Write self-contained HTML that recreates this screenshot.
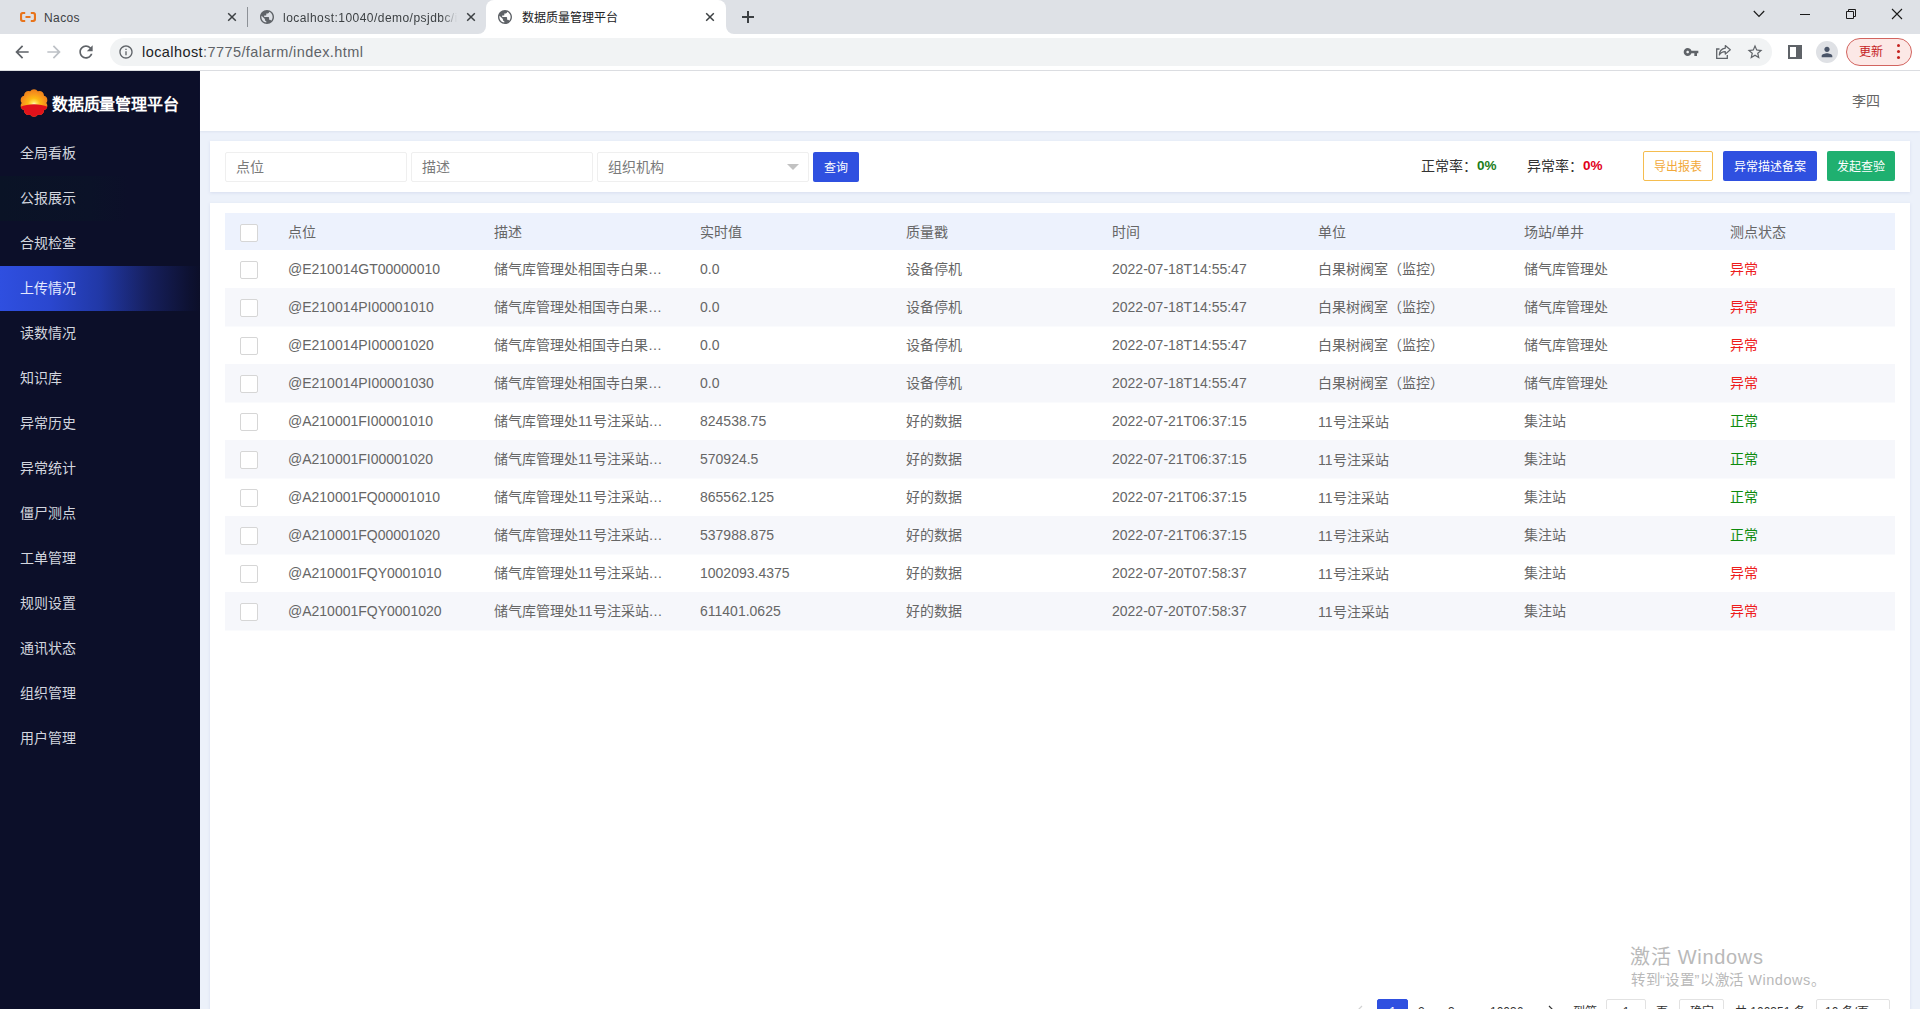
<!DOCTYPE html>
<html lang="zh-CN">
<head>
<meta charset="utf-8">
<title>数据质量管理平台</title>
<style>
*{box-sizing:border-box;margin:0;padding:0}
html,body{width:1920px;height:1009px;overflow:hidden;background:#fff;font-family:"Liberation Sans",sans-serif;color:#666}
body{position:relative}
.a{position:absolute}
svg{display:block;position:absolute;overflow:visible}
/* ---------- browser chrome ---------- */
#tabbar{left:0;top:0;width:1920px;height:34px;background:#dee1e6}
#acttab{left:486px;top:0;width:240px;height:34px;background:#fff;border-radius:8px 8px 0 0}
.foot{width:8px;height:8px;top:26px;background:#fff}
.foot i{display:block;width:8px;height:8px;background:#dee1e6}
.tt{top:10px;height:16px;line-height:16px;font-size:12px;color:#3c4043;white-space:nowrap;overflow:hidden}
#toolbar{left:0;top:34px;width:1920px;height:36px;background:#fff}
#tbline{left:0;top:70px;width:1920px;height:1px;background:#dcdee1}
#omni{left:110px;top:38px;width:1662px;height:28px;border-radius:14px;background:#f1f3f4}
#url{left:142px;top:42px;height:20px;line-height:20px;font-size:14.5px;color:#5f6368;white-space:nowrap;letter-spacing:.42px}
#url b{font-weight:400;color:#202124}
#upd{left:1846px;top:38px;width:66px;height:28px;border-radius:14px;border:1px solid #d2645f;background:#fce8e6}
#upd span{position:absolute;left:12px;top:6px;font-size:12px;line-height:14px;color:#c5221f;white-space:nowrap}
/* ---------- app ---------- */
#side{left:0;top:71px;width:200px;height:938px;background:#0c0f29}
#hdr{left:200px;top:71px;width:1720px;height:60px;background:#fff;box-shadow:0 1px 2px rgba(100,120,160,.10)}
#bg{left:200px;top:131px;width:1720px;height:878px;background:#ecf1fa}

#side .mi{position:absolute;left:0;width:200px;height:45px;line-height:45px;padding-left:20px;font-size:14px;color:#d3d6df;white-space:nowrap}
#side .on{background:linear-gradient(90deg,#2f4fe0 0%,#2a47cf 25%,#2138a6 50%,#161f5c 75%,#0d1131 95%,#0c0f29 100%);color:#e4e9ff}
#logo-t{left:52px;top:23px;height:22px;line-height:22px;font-size:16px;font-weight:700;color:#fff;white-space:nowrap;letter-spacing:-.2px}
#user{left:1852px;top:91px;font-size:14px;line-height:20px;color:#666;white-space:nowrap}
.card{background:#fff;box-shadow:0 1px 3px rgba(120,140,190,.18)}
.inp{top:152px;height:30px;border:1px solid #efefef;border-radius:2px;background:#fff;font-size:14px;line-height:28px;padding-left:10px;color:#7a7a7a;white-space:nowrap}
.btn{top:152px;height:30px;line-height:30px;border-radius:2px;font-size:12px;color:#fff;text-align:center;white-space:nowrap;font-weight:400;padding-top:1px}
.rate{top:156px;height:20px;line-height:20px;font-size:14px;color:#333;white-space:nowrap}
.rate b{position:absolute;left:56px;top:0;font-size:13.5px}

#th{left:225px;top:213px;width:1670px;height:37px;background:#edf2fd}
.tr{position:absolute;left:225px;width:1670px;height:38px}
.tr.ev{background:#f6f7fb;box-shadow:0 1px 0 #fafbfd}
.c{position:absolute;top:0;height:100%;font-size:14px;color:#666;white-space:nowrap;overflow:hidden;display:flex;align-items:center}
.cb{position:absolute;left:15px;width:18px;height:18px;border:1px solid #d6d6d6;border-radius:2px;background:#fff}
.z{padding-bottom:2px}
.bad{color:#ee1c1c}
.ok{color:#0d8a0d}
.pg{top:999px;height:30px;border:1px solid #e2e2e2;background:#fff;font-size:12px;line-height:24px;color:#333;text-align:center;white-space:nowrap}
.pt{top:1000px;font-size:12px;line-height:24px;color:#333;white-space:nowrap}
#wm1{left:1630px;top:943px;font-size:20px;line-height:28px;color:#b9b9b9;white-space:nowrap;letter-spacing:.7px}
#wm2{left:1631px;top:970px;font-size:14.5px;line-height:20px;color:#b9b9b9;white-space:nowrap;letter-spacing:.55px}
</style>
</head>
<body>
<!-- ======= browser chrome ======= -->
<div id="tabbar" class="a"></div>
<div id="acttab" class="a"></div>
<div class="a foot" style="left:478px"><i style="border-radius:0 0 8px 0"></i></div>
<div class="a foot" style="left:726px"><i style="border-radius:0 0 0 8px"></i></div>
<div id="toolbar" class="a"></div>
<div id="tbline" class="a"></div>
<div id="omni" class="a"></div>
<div id="url" class="a"><b>localhost</b>:7775/falarm/index.html</div>
<!-- tab 1 : Nacos -->
<svg style="left:20px;top:12px" width="16" height="10" viewBox="0 0 16 10"><path d="M5.200 0H2.400C1.100 0 0 1.100 0 2.400v5.200C0 8.900 1.100 10 2.400 10h2.800V7.900H3c-.5 0-.9-.4-.9-.9V3c0-.5.400-.9.9-.9h2.200zM10.800 0h2.800C14.900 0 16 1.100 16 2.400v5.200c0 1.300-1.100 2.400-2.400 2.400h-2.800V7.900H13c.5 0 .9-.4.9-.9V3c0-.5-.4-.9-.9-.9h-2.200zM5.500 4.100h5v1.800h-5z" fill="#e8741c"/></svg>
<div class="a tt" style="left:44px;width:170px;letter-spacing:.4px">Nacos</div>
<svg style="left:226px;top:11px" width="12" height="12" viewBox="0 0 12 12"><path d="M2.200 2.200l7.600 7.600M9.800 2.200l-7.600 7.600" stroke="#3c4043" stroke-width="1.500" fill="none"/></svg>
<div class="a" style="left:247px;top:7px;width:1px;height:20px;background:#8d9197"></div>
<!-- tab 2 : localhost:10040 -->
<svg style="left:260px;top:10px" width="14" height="14" viewBox="2 2 20 20"><path fill="#5f6368" d="M12 2C6.480 2 2 6.480 2 12s4.480 10 10 10 10-4.480 10-10S17.520 2 12 2zm-1 17.930c-3.950-.490-7-3.850-7-7.930 0-.620.080-1.210.210-1.790L9 15v1c0 1.100.9 2 2 2v1.930zm6.900-2.540c-.260-.810-1-1.390-1.900-1.390h-1v-3c0-.550-.450-1-1-1H8v-2h2c.550 0 1-.450 1-1V7h2c1.100 0 2-.9 2-2v-.410c2.930 1.190 5 4.060 5 7.410 0 2.080-.8 3.970-2.100 5.390z"/></svg>
<div class="a tt" style="left:283px;width:176px;letter-spacing:.46px;-webkit-mask-image:linear-gradient(90deg,#000 90%,transparent 99%);mask-image:linear-gradient(90deg,#000 90%,transparent 99%)">localhost:10040/demo/psjdbc/index</div>
<svg style="left:465px;top:11px" width="12" height="12" viewBox="0 0 12 12"><path d="M2.200 2.200l7.600 7.600M9.800 2.200l-7.600 7.600" stroke="#3c4043" stroke-width="1.500" fill="none"/></svg>
<!-- tab 3 : active -->
<svg style="left:498px;top:10px" width="14" height="14" viewBox="2 2 20 20"><path fill="#5f6368" d="M12 2C6.480 2 2 6.480 2 12s4.480 10 10 10 10-4.480 10-10S17.520 2 12 2zm-1 17.930c-3.950-.490-7-3.850-7-7.930 0-.620.080-1.210.210-1.790L9 15v1c0 1.100.9 2 2 2v1.930zm6.900-2.540c-.260-.810-1-1.390-1.900-1.390h-1v-3c0-.550-.450-1-1-1H8v-2h2c.550 0 1-.450 1-1V7h2c1.100 0 2-.9 2-2v-.410c2.930 1.190 5 4.060 5 7.410 0 2.080-.8 3.970-2.100 5.390z"/></svg>
<div class="a tt" style="left:522px;width:170px;color:#202124">数据质量管理平台</div>
<svg style="left:704px;top:11px" width="12" height="12" viewBox="0 0 12 12"><path d="M2.200 2.200l7.600 7.600M9.800 2.200l-7.600 7.600" stroke="#3c4043" stroke-width="1.500" fill="none"/></svg>
<svg style="left:741px;top:10px" width="14" height="14" viewBox="0 0 14 14"><path d="M7 1v12M1 7h12" stroke="#3c4043" stroke-width="2" fill="none"/></svg>
<!-- window controls -->
<svg style="left:1753px;top:10px" width="12" height="8" viewBox="0 0 12 8"><path d="M.8 1l5.200 5.400L11.200 1" stroke="#1a1a1a" stroke-width="1.200" fill="none"/></svg>
<div class="a" style="left:1800px;top:14px;width:10px;height:1px;background:#1a1a1a"></div>
<svg style="left:1846px;top:9px" width="10" height="10" viewBox="0 0 10 10"><path d="M.5 2.500h7v7h-7zM2.500 2.500v-2h7v7h-2" stroke="#1a1a1a" stroke-width="1" fill="none"/></svg>
<svg style="left:1892px;top:9px" width="10" height="10" viewBox="0 0 10 10"><path d="M0 0l10 10M10 0L0 10" stroke="#1a1a1a" stroke-width="1.100" fill="none"/></svg>
<!-- nav buttons -->
<svg style="left:12px;top:42px" width="20" height="20" viewBox="0 0 24 24"><path fill="#5f6368" d="M20 11H7.830l5.590-5.590L12 4l-8 8 8 8 1.410-1.410L7.830 13H20v-2z"/></svg>
<svg style="left:44px;top:42px" width="20" height="20" viewBox="0 0 24 24"><path fill="#bdc1c6" d="M4 11h12.170l-5.590-5.590L12 4l8 8-8 8-1.410-1.410L16.170 13H4v-2z"/></svg>
<svg style="left:76px;top:42px" width="20" height="20" viewBox="0 0 24 24"><path fill="#5f6368" d="M17.650 6.350C16.200 4.900 14.210 4 12 4c-4.420 0-7.990 3.580-7.990 8s3.570 8 7.990 8c3.730 0 6.840-2.550 7.730-6h-2.080c-.820 2.330-3.040 4-5.650 4-3.310 0-6-2.690-6-6s2.690-6 6-6c1.660 0 3.140.690 4.220 1.780L13 11h7V4l-2.350 2.350z"/></svg>
<svg style="left:118px;top:44px" width="16" height="16" viewBox="0 0 24 24"><path fill="#5f6368" d="M11 7h2v2h-2zm0 4h2v6h-2zm1-9C6.480 2 2 6.480 2 12s4.480 10 10 10 10-4.480 10-10S17.520 2 12 2zm0 18c-4.410 0-8-3.590-8-8s3.590-8 8-8 8 3.590 8 8-3.590 8-8 8z"/></svg>
<!-- omnibox right icons -->
<svg style="left:1683px;top:44px" width="16" height="16" viewBox="0 0 24 24"><path fill="#5f6368" d="M12.650 10C11.830 7.670 9.610 6 7 6c-3.310 0-6 2.690-6 6s2.690 6 6 6c2.610 0 4.830-1.670 5.650-4H17v4h4v-4h2v-4H12.650zM7 14c-1.100 0-2-.9-2-2s.9-2 2-2 2 .9 2 2-.9 2-2 2z"/></svg>
<svg style="left:1715px;top:44px" width="17" height="16" viewBox="0 0 17 16"><path d="M4.500 5H1.700v9.300h10.600V11" stroke="#5f6368" stroke-width="1.300" fill="none"/><path d="M10.300 1.500l5 4.300-5 4.300V7.600C7.300 7.500 5.500 8.800 4.300 11c.2-3.600 2.300-6.300 6-6.800z" stroke="#5f6368" stroke-width="1.200" fill="none" stroke-linejoin="round"/></svg>
<svg style="left:1746px;top:43px" width="18" height="18" viewBox="0 0 24 24"><path fill="#5f6368" d="M22 9.240l-7.190-.620L12 2 9.190 8.630 2 9.240l5.460 4.730L5.820 21 12 17.270 18.180 21l-1.630-7.030L22 9.240zM12 15.400l-3.760 2.270 1-4.280-3.320-2.880 4.380-.380L12 6.100l1.710 4.040 4.380.380-3.320 2.880 1 4.280L12 15.400z"/></svg>
<svg style="left:1788px;top:45px" width="14" height="14" viewBox="0 0 14 14"><path d="M1 1h12v12H1z" stroke="#5f6368" stroke-width="2" fill="none"/><path d="M8 1h5v12H8z" fill="#5f6368"/></svg>
<div class="a" style="left:1816px;top:41px;width:22px;height:22px;border-radius:11px;background:#dfe1e5"></div>
<svg style="left:1819px;top:44px" width="16" height="16" viewBox="0 0 24 24"><path fill="#4a5568" d="M12 12c2.210 0 4-1.790 4-4s-1.790-4-4-4-4 1.790-4 4 1.790 4 4 4zm0 2c-2.670 0-8 1.340-8 4v2h16v-2c0-2.660-5.330-4-8-4z"/></svg>
<div id="upd" class="a"><span>更新</span><i class="a" style="left:50px;top:5px;width:3px;height:3px;border-radius:2px;background:#c5221f;box-shadow:0 6px 0 #c5221f,0 12px 0 #c5221f"></i></div>

<!-- ======= app ======= -->
<div id="side" class="a">
<svg style="left:20px;top:18px" width="28" height="28" viewBox="0 0 28 28"><defs><radialGradient id="sun" gradientUnits="userSpaceOnUse" cx="14" cy="15.500" r="14"><stop offset="0" stop-color="#fffbe0"/><stop offset=".18" stop-color="#ffe45a"/><stop offset=".45" stop-color="#fdb813"/><stop offset=".8" stop-color="#f7941d"/><stop offset="1" stop-color="#f08519"/></radialGradient><clipPath id="fl"><circle cx="14" cy="14" r="9.6"/><circle cx="14.00" cy="4.70" r="4.5"/><circle cx="8.53" cy="6.48" r="4.5"/><circle cx="5.16" cy="11.13" r="4.5"/><circle cx="5.16" cy="16.87" r="4.5"/><circle cx="8.53" cy="21.52" r="4.5"/><circle cx="14.00" cy="23.30" r="4.5"/><circle cx="19.47" cy="21.52" r="4.5"/><circle cx="22.84" cy="16.87" r="4.5"/><circle cx="22.84" cy="11.13" r="4.5"/><circle cx="19.47" cy="6.48" r="4.5"/></clipPath></defs><g clip-path="url(#fl)"><rect width="28" height="28" fill="url(#sun)"/><path d="M-1 18.500C3.500 16.200 8.500 15.200 14 15.200s10.500 1 15 3.300V29H-1z" fill="#e1121b"/></g></svg>
<div id="logo-t" class="a">数据质量管理平台</div>
<div class="mi" style="top:60px">全局看板</div>
<div class="mi" style="top:105px;background:linear-gradient(90deg,#0a1326 0%,#0b1228 45%,#0c0f29 64%)">公报展示</div>
<div class="mi" style="top:150px">合规检查</div>
<div class="mi on" style="top:195px">上传情况</div>
<div class="mi" style="top:240px">读数情况</div>
<div class="mi" style="top:285px">知识库</div>
<div class="mi" style="top:330px">异常历史</div>
<div class="mi" style="top:375px">异常统计</div>
<div class="mi" style="top:420px">僵尸测点</div>
<div class="mi" style="top:465px">工单管理</div>
<div class="mi" style="top:510px">规则设置</div>
<div class="mi" style="top:555px">通讯状态</div>
<div class="mi" style="top:600px">组织管理</div>
<div class="mi" style="top:645px">用户管理</div>
</div>
<div id="bg" class="a"></div>
<div id="hdr" class="a"></div>
<div id="user" class="a">李四</div>
<!-- filter card -->
<div class="a card" style="left:210px;top:141px;width:1700px;height:51px"></div>
<div class="a inp" style="left:225px;width:182px">点位</div>
<div class="a inp" style="left:411px;width:182px">描述</div>
<div class="a inp" style="left:597px;width:212px">组织机构</div>
<div class="a" style="left:787px;top:164px;width:0;height:0;border:6px solid transparent;border-top:6px solid #c2c2c2"></div>
<div class="a btn" style="left:813px;width:46px;background:#2f50e0">查询</div>
<div class="a rate" style="left:1421px">正常率：<b style="color:#1a7d1a">0%</b></div>
<div class="a rate" style="left:1527px">异常率：<b style="color:#e1001a">0%</b></div>
<div class="a btn" style="left:1643px;top:151px;width:70px;border:1px solid #f5bd4f;background:#fff;color:#f2a93b;line-height:28px;font-weight:400">导出报表</div>
<div class="a btn" style="left:1723px;top:151px;width:94px;background:#2f50e0">异常描述备案</div>
<div class="a btn" style="left:1827px;top:151px;width:68px;background:#1fb070">发起查验</div>
<!-- table card -->
<div class="a card" style="left:210px;top:203px;width:1700px;height:820px"></div>
<!-- table -->
<div id="th" class="a"><i class="cb" style="top:11px"></i><span class="c z" style="left:63px;width:200px">点位</span><span class="c z" style="left:269px;width:172px">描述</span><span class="c z" style="left:475px;width:200px">实时值</span><span class="c z" style="left:681px;width:200px">质量戳</span><span class="c z" style="left:887px;width:200px">时间</span><span class="c z" style="left:1093px;width:200px">单位</span><span class="c z" style="left:1299px;width:200px">场站/单井</span><span class="c z" style="left:1505px;width:160px">测点状态</span></div>
<div class="tr" style="top:250px"><i class="cb" style="top:11px"></i><span class="c" style="left:63px;width:200px">@E210014GT00000010</span><span class="c z" style="left:269px;width:172px">储气库管理处相国寺白果…</span><span class="c" style="left:475px;width:200px">0.0</span><span class="c z" style="left:681px;width:200px">设备停机</span><span class="c" style="left:887px;width:200px">2022-07-18T14:55:47</span><span class="c z" style="left:1093px;width:200px">白果树阀室（监控）</span><span class="c z" style="left:1299px;width:200px">储气库管理处</span><span class="c bad z" style="left:1505px;width:160px">异常</span></div>
<div class="tr ev" style="top:288px"><i class="cb" style="top:11px"></i><span class="c" style="left:63px;width:200px">@E210014PI00001010</span><span class="c z" style="left:269px;width:172px">储气库管理处相国寺白果…</span><span class="c" style="left:475px;width:200px">0.0</span><span class="c z" style="left:681px;width:200px">设备停机</span><span class="c" style="left:887px;width:200px">2022-07-18T14:55:47</span><span class="c z" style="left:1093px;width:200px">白果树阀室（监控）</span><span class="c z" style="left:1299px;width:200px">储气库管理处</span><span class="c bad z" style="left:1505px;width:160px">异常</span></div>
<div class="tr" style="top:326px"><i class="cb" style="top:11px"></i><span class="c" style="left:63px;width:200px">@E210014PI00001020</span><span class="c z" style="left:269px;width:172px">储气库管理处相国寺白果…</span><span class="c" style="left:475px;width:200px">0.0</span><span class="c z" style="left:681px;width:200px">设备停机</span><span class="c" style="left:887px;width:200px">2022-07-18T14:55:47</span><span class="c z" style="left:1093px;width:200px">白果树阀室（监控）</span><span class="c z" style="left:1299px;width:200px">储气库管理处</span><span class="c bad z" style="left:1505px;width:160px">异常</span></div>
<div class="tr ev" style="top:364px"><i class="cb" style="top:11px"></i><span class="c" style="left:63px;width:200px">@E210014PI00001030</span><span class="c z" style="left:269px;width:172px">储气库管理处相国寺白果…</span><span class="c" style="left:475px;width:200px">0.0</span><span class="c z" style="left:681px;width:200px">设备停机</span><span class="c" style="left:887px;width:200px">2022-07-18T14:55:47</span><span class="c z" style="left:1093px;width:200px">白果树阀室（监控）</span><span class="c z" style="left:1299px;width:200px">储气库管理处</span><span class="c bad z" style="left:1505px;width:160px">异常</span></div>
<div class="tr" style="top:402px"><i class="cb" style="top:11px"></i><span class="c" style="left:63px;width:200px">@A210001FI00001010</span><span class="c z" style="left:269px;width:172px">储气库管理处11号注采站…</span><span class="c" style="left:475px;width:200px">824538.75</span><span class="c z" style="left:681px;width:200px">好的数据</span><span class="c" style="left:887px;width:200px">2022-07-21T06:37:15</span><span class="c" style="left:1093px;width:200px">11号注采站</span><span class="c z" style="left:1299px;width:200px">集注站</span><span class="c ok z" style="left:1505px;width:160px">正常</span></div>
<div class="tr ev" style="top:440px"><i class="cb" style="top:11px"></i><span class="c" style="left:63px;width:200px">@A210001FI00001020</span><span class="c z" style="left:269px;width:172px">储气库管理处11号注采站…</span><span class="c" style="left:475px;width:200px">570924.5</span><span class="c z" style="left:681px;width:200px">好的数据</span><span class="c" style="left:887px;width:200px">2022-07-21T06:37:15</span><span class="c" style="left:1093px;width:200px">11号注采站</span><span class="c z" style="left:1299px;width:200px">集注站</span><span class="c ok z" style="left:1505px;width:160px">正常</span></div>
<div class="tr" style="top:478px"><i class="cb" style="top:11px"></i><span class="c" style="left:63px;width:200px">@A210001FQ00001010</span><span class="c z" style="left:269px;width:172px">储气库管理处11号注采站…</span><span class="c" style="left:475px;width:200px">865562.125</span><span class="c z" style="left:681px;width:200px">好的数据</span><span class="c" style="left:887px;width:200px">2022-07-21T06:37:15</span><span class="c" style="left:1093px;width:200px">11号注采站</span><span class="c z" style="left:1299px;width:200px">集注站</span><span class="c ok z" style="left:1505px;width:160px">正常</span></div>
<div class="tr ev" style="top:516px"><i class="cb" style="top:11px"></i><span class="c" style="left:63px;width:200px">@A210001FQ00001020</span><span class="c z" style="left:269px;width:172px">储气库管理处11号注采站…</span><span class="c" style="left:475px;width:200px">537988.875</span><span class="c z" style="left:681px;width:200px">好的数据</span><span class="c" style="left:887px;width:200px">2022-07-21T06:37:15</span><span class="c" style="left:1093px;width:200px">11号注采站</span><span class="c z" style="left:1299px;width:200px">集注站</span><span class="c ok z" style="left:1505px;width:160px">正常</span></div>
<div class="tr" style="top:554px"><i class="cb" style="top:11px"></i><span class="c" style="left:63px;width:200px">@A210001FQY0001010</span><span class="c z" style="left:269px;width:172px">储气库管理处11号注采站…</span><span class="c" style="left:475px;width:200px">1002093.4375</span><span class="c z" style="left:681px;width:200px">好的数据</span><span class="c" style="left:887px;width:200px">2022-07-20T07:58:37</span><span class="c" style="left:1093px;width:200px">11号注采站</span><span class="c z" style="left:1299px;width:200px">集注站</span><span class="c bad z" style="left:1505px;width:160px">异常</span></div>
<div class="tr ev" style="top:592px"><i class="cb" style="top:11px"></i><span class="c" style="left:63px;width:200px">@A210001FQY0001020</span><span class="c z" style="left:269px;width:172px">储气库管理处11号注采站…</span><span class="c" style="left:475px;width:200px">611401.0625</span><span class="c z" style="left:681px;width:200px">好的数据</span><span class="c" style="left:887px;width:200px">2022-07-20T07:58:37</span><span class="c" style="left:1093px;width:200px">11号注采站</span><span class="c z" style="left:1299px;width:200px">集注站</span><span class="c bad z" style="left:1505px;width:160px">异常</span></div>
<!-- pagination (cut off by viewport) -->
<svg style="left:1355px;top:1005px" width="8" height="12" viewBox="0 0 8 12"><path d="M7 1L2 6l5 5" stroke="#d2d2d2" stroke-width="1.200" fill="none"/></svg>
<div class="a pg" style="left:1377px;width:31px;background:#2f50e0;border-color:#2f50e0;color:#fff;border-radius:2px">1</div>
<div class="a pt" style="left:1418px">2</div>
<div class="a pt" style="left:1448px">3</div>
<div class="a pt" style="left:1472px">…</div>
<div class="a pt" style="left:1490px">10036</div>
<svg style="left:1548px;top:1005px" width="8" height="12" viewBox="0 0 8 12"><path d="M1 1l5 5-5 5" stroke="#333" stroke-width="1.200" fill="none"/></svg>
<div class="a pt" style="left:1573px">到第</div>
<div class="a pg" style="left:1606px;width:40px;border-radius:2px">1</div>
<div class="a pt" style="left:1656px">页</div>
<div class="a pg" style="left:1679px;width:45px;border-radius:2px">确定</div>
<div class="a pt" style="left:1735px">共 100351 条</div>
<div class="a pg" style="left:1816px;width:74px;border-radius:2px;text-align:left;padding-left:8px">10 条/页</div>
<!-- windows watermark -->
<div id="wm1" class="a">激活 Windows</div>
<div id="wm2" class="a">转到“设置”以激活 Windows。</div>
</body>
</html>
